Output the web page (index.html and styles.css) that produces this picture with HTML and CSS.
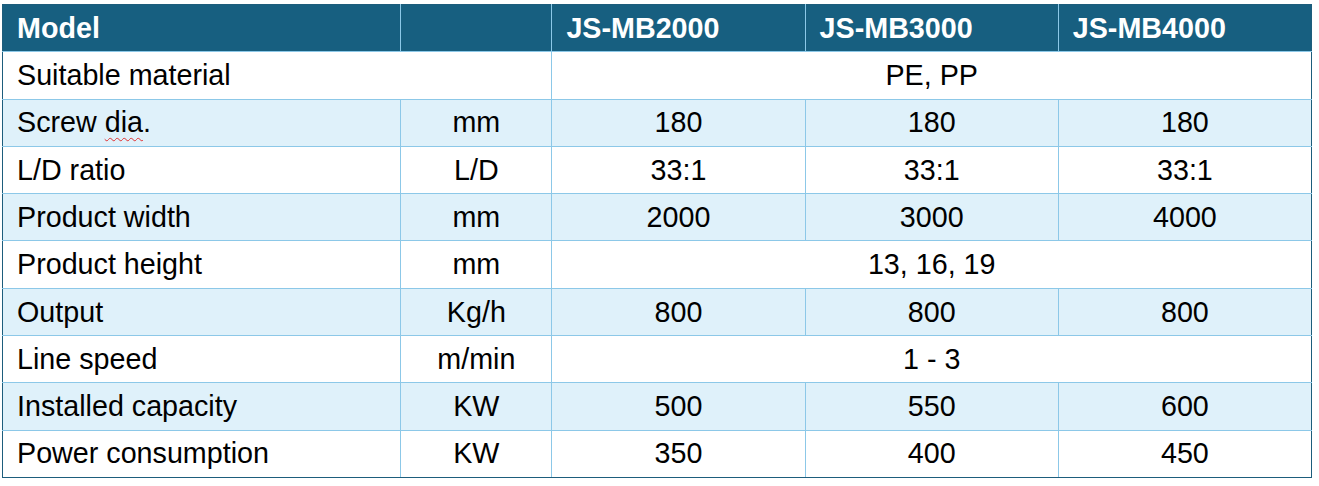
FILE: index.html
```html
<!DOCTYPE html>
<html lang="en">
<head>
    <meta charset="UTF-8">
    <title>Specifications</title>
    <link rel="stylesheet" href="styles.css">
</head>
<body>
    <table class="spec-table">
        <colgroup>
            <col class="col-name">
            <col class="col-unit">
            <col class="col-model">
            <col class="col-model">
            <col class="col-model">
        </colgroup>
        <thead>
            <tr>
                <th>Model</th>
                <th></th>
                <th>JS-MB2000</th>
                <th>JS-MB3000</th>
                <th>JS-MB4000</th>
            </tr>
        </thead>
        <tbody>
            <tr>
                <td class="name" colspan="2">Suitable material</td>
                <td colspan="3">PE, PP</td>
            </tr>
            <tr class="alt">
                <td class="name">Screw <span class="spell">dia</span>.</td>
                <td>mm</td>
                <td>180</td>
                <td>180</td>
                <td>180</td>
            </tr>
            <tr>
                <td class="name">L/D ratio</td>
                <td>L/D</td>
                <td>33:1</td>
                <td>33:1</td>
                <td>33:1</td>
            </tr>
            <tr class="alt">
                <td class="name">Product width</td>
                <td>mm</td>
                <td>2000</td>
                <td>3000</td>
                <td>4000</td>
            </tr>
            <tr>
                <td class="name">Product height</td>
                <td>mm</td>
                <td colspan="3">13, 16, 19</td>
            </tr>
            <tr class="alt">
                <td class="name">Output</td>
                <td>Kg/h</td>
                <td>800</td>
                <td>800</td>
                <td>800</td>
            </tr>
            <tr>
                <td class="name">Line speed</td>
                <td>m/min</td>
                <td colspan="3">1 - 3</td>
            </tr>
            <tr class="alt">
                <td class="name">Installed capacity</td>
                <td>KW</td>
                <td>500</td>
                <td>550</td>
                <td>600</td>
            </tr>
            <tr>
                <td class="name">Power consumption</td>
                <td>KW</td>
                <td>350</td>
                <td>400</td>
                <td>450</td>
            </tr>
        </tbody>
    </table>
</body>
</html>
```

FILE: styles.css
```css
* {
    margin: 0;
    padding: 0;
    box-sizing: border-box;
}

body {
    background: #ffffff;
    padding: 4px 0 0 2px;
    font-family: 'Liberation Sans', Arial, sans-serif;
    color: #000000;
}

.spec-table {
    width: 1310px;
    border-collapse: collapse;
    table-layout: fixed;
    border: 1px solid #1d5d7c;
    font-size: 28.7px;
}

.col-name {
    width: 398px;
}

.col-unit {
    width: 151px;
}

.col-model {
    width: 253px;
}

.spec-table th,
.spec-table td {
    height: 47.3px;
    border: 1px solid #8cc8e8;
    padding: 0 14px;
    vertical-align: middle;
    line-height: 1;
}

.spec-table thead tr {
    background: #175f80;
}

.spec-table th {
    color: #ffffff;
    font-weight: bold;
    text-align: left;
    border-top-color: #1d5d7c;
}

.spec-table td {
    text-align: center;
    padding-top: 0;
}

.spec-table td.name {
    text-align: left;
}

.spec-table td:first-child,
.spec-table th:first-child {
    border-left-color: #1d5d7c;
}

.spec-table td:last-child,
.spec-table th:last-child {
    border-right-color: #1d5d7c;
}

.spec-table tbody tr:last-child td {
    border-bottom-color: #1d5d7c;
}

.alt {
    background: #dff1fa;
}

.spell {
    text-decoration: underline wavy #e03030 1px;
    text-underline-offset: 5px;
}
```
